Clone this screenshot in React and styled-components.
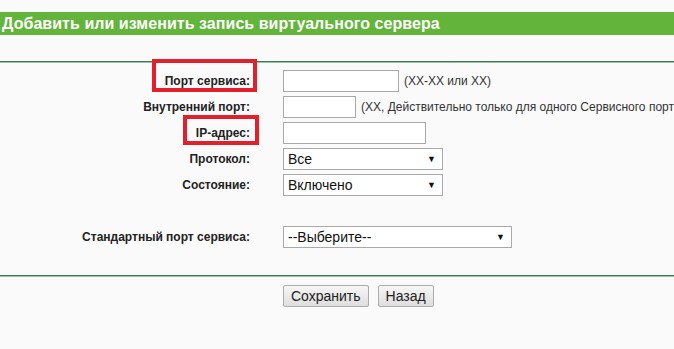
import styled, { createGlobalStyle } from "styled-components";

const GlobalStyle = createGlobalStyle`
  html, body {
    margin: 0;
    padding: 0;
    background: #fafafa;
    overflow: hidden;
    font-family: "Liberation Sans", Arial, sans-serif;
  }
`;

const Page = styled.div`
  width: 674px;
  height: 349px;
  padding-top: 12px;
  box-sizing: border-box;
  white-space: nowrap;
  overflow: hidden;
`;

const TitleBar = styled.div`
  height: 23px;
  line-height: 23px;
  background: #63b43a;
  color: #fff;
  font-size: 16px;
  font-weight: bold;
  padding-left: 2px;
  letter-spacing: 0.05px;
`;

const Divider = styled.div`
  height: 1px;
  background: #3f7a55;
  border-bottom: 1px solid #9cbfa9;
  margin-top: ${({ $top }) => $top}px;
`;

const Form = styled.div`
  display: grid;
  grid-template-columns: 250px auto;
  column-gap: 33px;
  grid-auto-rows: 26px;
  align-items: center;
  padding-top: 5px;
`;

const Label = styled.div`
  text-align: right;
  font-size: 12px;
  font-weight: bold;
  color: #222;
  line-height: 14px;
`;

const Mark = styled.span`
  position: relative;
  &::after {
    content: "";
    position: absolute;
    top: ${({ $t }) => $t}px;
    bottom: ${({ $b }) => $b}px;
    left: ${({ $l }) => $l}px;
    right: ${({ $r }) => $r}px;
    border: 4px solid #e2202b;
  }
`;

const Field = styled.div`
  display: flex;
  align-items: center;
  gap: 5px;
`;

const TextInput = styled.input`
  box-sizing: border-box;
  width: ${({ $w }) => $w}px;
  height: 22px;
  margin: 0;
  border: 1px solid #a9a9a9;
  background: #fff;
  padding: 0 4px;
`;

const Hint = styled.span`
  font-size: 12px;
  color: #333;
`;

const SelectBox = styled.div`
  position: relative;
  box-sizing: border-box;
  width: ${({ $w }) => $w}px;
  height: 22px;
  border: 1px solid #a9a9a9;
  background: #fff;
  font-size: 14px;
  color: #111;
  line-height: 20px;
  padding-left: 4px;
`;

const Arrow = styled.span`
  position: absolute;
  right: 6px;
  top: 0;
  font-size: 9px;
  color: #111;
`;

const Blank = styled.div`
  grid-column: 1 / -1;
`;

const Actions = styled.div`
  display: flex;
  gap: 9px;
  padding-left: 283px;
  margin-top: 8px;
`;

const Button = styled.button`
  box-sizing: border-box;
  height: 22px;
  padding: 0 7px;
  margin: 0;
  font-family: "Liberation Sans", Arial, sans-serif;
  font-size: 14px;
  color: #222;
  background: linear-gradient(#f6f6f6, #dedede);
  border: 1px solid #acacac;
  border-radius: 2px;
`;

function Select({ width, value }) {
  return (
    <SelectBox $w={width}>
      {value}
      <Arrow>▼</Arrow>
    </SelectBox>
  );
}

export default function App() {
  return (
    <Page>
      <GlobalStyle />
      <TitleBar>Добавить или изменить запись виртуального сервера</TitleBar>
      <Divider $top={26} />
      <Form>
        <Label>
          <Mark $t={-15} $b={-4} $l={-13} $r={-7}>Порт сервиса:</Mark>
        </Label>
        <Field>
          <TextInput $w={116} />
          <Hint>(XX-XX или XX)</Hint>
        </Field>

        <Label>Внутренний порт:</Label>
        <Field>
          <TextInput $w={73} />
          <Hint>(XX, Действительно только для одного Сервисного порта)</Hint>
        </Field>

        <Label>
          <Mark $t={-11} $b={-5} $l={-13} $r={-9}>IP-адрес:</Mark>
        </Label>
        <Field>
          <TextInput $w={143} />
        </Field>

        <Label>Протокол:</Label>
        <Field>
          <Select width={160} value="Все" />
        </Field>

        <Label>Состояние:</Label>
        <Field>
          <Select width={160} value="Включено" />
        </Field>

        <Blank />

        <Label>Стандартный порт сервиса:</Label>
        <Field>
          <Select width={229} value="--Выберите--" />
        </Field>
      </Form>
      <Divider $top={25} />
      <Actions>
        <Button>Сохранить</Button>
        <Button>Назад</Button>
      </Actions>
    </Page>
  );
}
